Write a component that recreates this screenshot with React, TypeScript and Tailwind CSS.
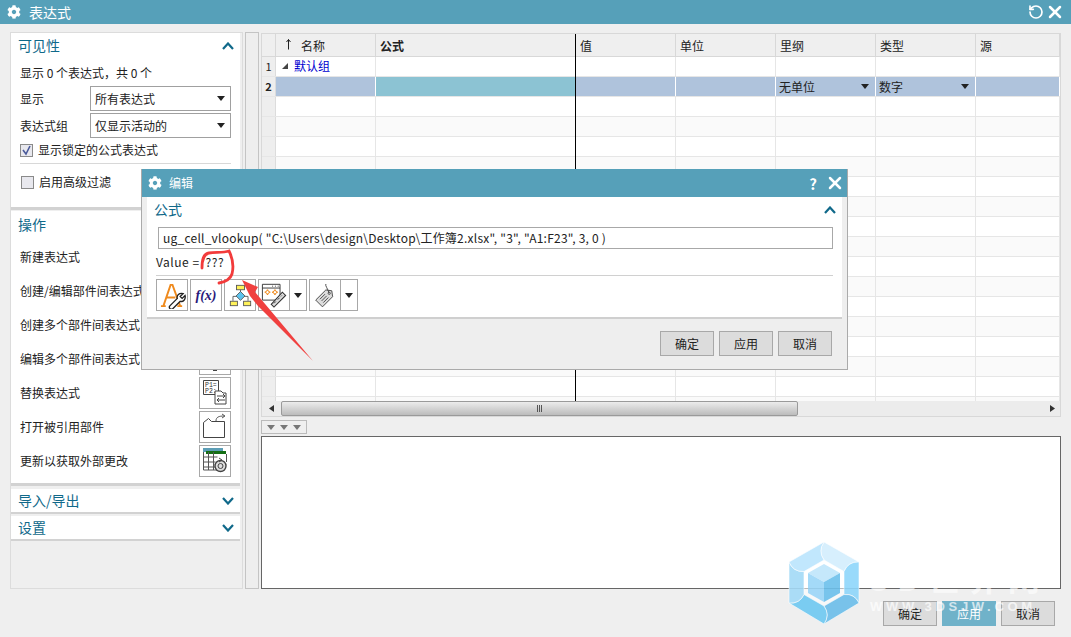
import { RotateCcw, X } from 'lucide-react';
import { FaCog } from 'react-icons/fa';

const FONT = '"Noto Sans CJK SC", sans-serif';

function Chevron({ down }: { down?: boolean }) {
  return (
    <svg width="12" height="8" viewBox="0 0 12 8">
      <polyline
        points={down ? '1,1 6,6.5 11,1' : '1,7 6,1.5 11,7'}
        fill="none"
        stroke="#10698a"
        strokeWidth="2.2"
      />
    </svg>
  );
}

function Caret({ color = '#222' }: { color?: string }) {
  return (
    <svg width="8" height="5" viewBox="0 0 8 5">
      <polygon points="0,0 8,0 4,5" fill={color} />
    </svg>
  );
}

function SelectBox({ label }: { label: string }) {
  return (
    <div className="flex h-[25px] w-[141px] items-center justify-between border border-[#a0a0a0] bg-white pl-[4px] pr-[5px]">
      <span>{label}</span>
      <Caret />
    </div>
  );
}

function Checkbox({ checked }: { checked?: boolean }) {
  return (
    <div className="flex h-[13px] w-[13px] items-center justify-center border border-[#8a8a8a] bg-[#e8e8ee]">
      {checked && (
        <svg width="11" height="11" viewBox="0 0 11 11">
          <polyline points="2,5 5,9 9,1" fill="none" stroke="#4a5a9a" strokeWidth="1.6" />
        </svg>
      )}
    </div>
  );
}

function ReplaceIcon() {
  return (
    <svg width="26" height="26" viewBox="0 0 26 26" fill="none" stroke="#444" strokeWidth="1">
      <path d="M1.5 1.5h15v14h-15z" fill="#fff" />
      <text x="3" y="7.5" fontSize="6.5" fontFamily="Liberation Mono" fill="#333" stroke="none">P1=</text>
      <text x="3" y="14" fontSize="6.5" fontFamily="Liberation Mono" fill="#333" stroke="none">P2:</text>
      <path d="M13 12h6l2 2h3v11h-11z" fill="#fff" />
      <path d="M15 17h8M21 15l2 2-2 2M23 21h-8M17 19l-2 2 2 2" />
    </svg>
  );
}

function OpenIcon() {
  return (
    <svg width="26" height="26" viewBox="0 0 26 26" fill="none" stroke="#444" strokeWidth="1">
      <path d="M1.5 9.5l5-4 3 3h13v16h-21z" />
      <path d="M14 8c0-4 3-5 8-5M20 1l3 2-3 2" stroke="#555" />
    </svg>
  );
}

function UpdateIcon() {
  return (
    <svg width="26" height="26" viewBox="0 0 26 26" fill="none" stroke="#555" strokeWidth="1">
      <rect x="1" y="1" width="20" height="4" fill="#5c9db5" stroke="none" />
      <rect x="4" y="4" width="20" height="3" fill="#156f15" stroke="none" />
      <path d="M1.5 5v18h14M1.5 10h14M1.5 15h12M1.5 20h12M6.5 5v18M11.5 5v18" />
      <path d="M24.5 7v8" />
      <circle cx="18.5" cy="19" r="5.5" stroke="#444" strokeWidth="1.4" fill="#ddd" />
      <circle cx="18.5" cy="19" r="2.5" stroke="#444" />
      <path d="M17 11l3 2-3 2" stroke="#444" />
    </svg>
  );
}

function FormulaIcon() {
  return (
    <svg width="27" height="27" viewBox="0 0 28 28" fill="none">
      <path d="M2 25h5M4.5 25L12 3h2l8 22M19 25h5M8 16h9" stroke="#ef8a1d" strokeWidth="2" />
      <path d="M11 25l8-8c-1-3 2-6 6-5l-3 3 2 2 3-3c1 4-2 7-5 6l-8 8c-2 1-4-1-3-3z" fill="#fff" stroke="#222" strokeWidth="1.4" />
    </svg>
  );
}

function FlowIcon() {
  return (
    <svg width="23" height="23" viewBox="0 0 26 26" fill="none" stroke="#555" strokeWidth="1">
      <path d="M13 6v4M4.5 19v-5H9M21.5 19v-5H17" />
      <rect x="8.5" y="1.5" width="9" height="5" fill="#fff25a" />
      <path d="M13 8.500l5 5-5 5-5-5z" fill="#5cc3ee" />
      <rect x="1.500" y="19.500" width="8" height="5" fill="#fff25a" />
      <rect x="16.500" y="19.500" width="8" height="5" fill="#fff25a" />
    </svg>
  );
}

function WindowLinkIcon() {
  return (
    <svg width="26" height="26" viewBox="0 0 28 28" fill="none">
      <path d="M1.500 2.500h19v17h-19z" stroke="#333" fill="#fff" />
      <path d="M1.500 6.500h19" stroke="#333" />
      <path d="M12 4.500h1M15 4.500h1M18 4.500h1" stroke="#333" />
      <path d="M4 11h6M7 8v6M12 11h6M15 8v6" stroke="#ef8a1d" strokeWidth="1.500" />
      <circle cx="7" cy="11" r="1.800" fill="#fff" stroke="#ef8a1d" />
      <circle cx="15" cy="11" r="1.800" fill="#fff" stroke="#ef8a1d" />
      <path d="M11 24L23 11l3.500 3.500L14 27z" fill="#ddd" stroke="#333" strokeWidth="1.200" />
      <path d="M14 23l2-2M18 19l2-2M21.500 15.500l1-1" stroke="#333" />
    </svg>
  );
}

function TagIcon() {
  return (
    <svg width="22" height="26" viewBox="0 0 26 28" fill="none" stroke="#444" strokeWidth="1.100">
      <path d="M2 20L14 8l7 1 1 7-12 12z" fill="#ddd" />
      <circle cx="18" cy="12" r="1.300" fill="#fff" />
      <path d="M18 12C16 6 13 3 14 1M7 19l6-6M9 21l6-6M11 23l6-6" />
    </svg>
  );
}

function ActionRow({ label, children }: { label: string; children?: React.ReactNode }) {
  return (
    <div className="flex h-[34px] items-center justify-between pl-[9px] pr-[9px]">
      <span>{label}</span>
      <div className="flex h-[32px] w-[32px] items-end justify-center border border-[#a8a8a8] bg-white pb-[3px]">{children}</div>
    </div>
  );
}

function SectionHead({ label, down }: { label: string; down?: boolean }) {
  return (
    <div className="flex h-[23px] items-center justify-between pl-[7px] pr-[6px] text-[14px] text-[#10698a]">
      <span>{label}</span>
      <Chevron down={down} />
    </div>
  );
}

const colClasses = ['w-[14px]', 'w-[100px]', 'w-[200px]', 'w-[100px]', 'w-[100px]', 'w-[100px]', 'w-[100px]', 'flex-1'];

function GridRow({ index }: { index: number }) {
  const selected = index === 2;
  const shade = index % 2 === 0 && !selected ? 'bg-[#fafafa]' : 'bg-white';
  return (
    <div className="flex h-[20px] shrink-0 border-b border-[#e6e6e6]">
      <div className={`${colClasses[0]} flex shrink-0 items-center justify-center border-r border-[#dcdcdc] bg-[#eeeeee] text-[11px] ${selected ? 'font-bold' : ''}`}>
        {index <= 2 ? index : ''}
      </div>
      {colClasses.slice(1).map((w, i) => {
        let bg = selected ? 'bg-[#afc3dc]' : shade;
        if (selected && i === 1) bg = 'bg-[#8cc3d3]';
        return (
          <div key={i} className={`${w} ${bg} flex shrink-0 items-center border-r ${selected ? 'border-white' : 'border-[#e6e6e6]'}`}>
            {index === 1 && i === 0 && (
              <span className="-mt-px flex items-center pl-[6px] text-[#0000d0]">
                <svg width="6" height="6" viewBox="0 0 6 6" className="mr-[6px]">
                  <polygon points="0,6 6,0 6,6" fill="#444" />
                </svg>
                默认组
              </span>
            )}
            {selected && i === 4 && (
              <div className="flex w-full items-center justify-between pl-[3px] pr-[6px]">
                <span>无单位</span>
                <Caret />
              </div>
            )}
            {selected && i === 5 && (
              <div className="flex w-full items-center justify-between pl-[3px] pr-[6px]">
                <span>数字</span>
                <Caret />
              </div>
            )}
          </div>
        );
      })}
    </div>
  );
}

function HeadCell({ w, children, bold }: { w: string; children?: React.ReactNode; bold?: boolean }) {
  return (
    <div className={`${w} flex shrink-0 items-center border-r border-[#d8d8d8] pl-[4px] pt-[2px] ${bold ? 'font-bold' : ''}`}>{children}</div>
  );
}

function FooterButton({ label, active }: { label: string; active?: boolean }) {
  return (
    <div className={`flex h-[25px] w-[54px] items-center justify-center border ${active ? 'border-[#70b2c9] bg-[#70b2c9] text-white' : 'border-[#a8a8a8] bg-[#dcdcdc]'}`}>
      {label}
    </div>
  );
}

function ToolButton({ children, caret }: { children: React.ReactNode; caret?: boolean }) {
  return (
    <div className="flex h-[32px] border border-[#a8a8a8] bg-white">
      <div className="flex w-[30px] items-center justify-center">{children}</div>
      {caret && (
        <div className="flex w-[17px] items-center justify-center border-l border-[#a8a8a8]">
          <Caret />
        </div>
      )}
    </div>
  );
}

function EditDialog() {
  return (
    <div className="absolute left-[141px] top-[169px] flex h-[201px] w-[707px] flex-col border-b border-l border-r border-[#aaaaaa] bg-[#eeeeee]">
      <div className="flex h-[28px] shrink-0 items-center justify-between bg-[#56a0b9] pl-[6px] pr-[2px] text-white">
        <div className="flex items-center gap-[7px]">
          <FaCog size={14} />
          <span>编辑</span>
        </div>
        <div className="flex items-center gap-[8px]">
          <span className="text-[15px] font-bold leading-none">?</span>
          <X size={20} strokeWidth={3} />
        </div>
      </div>
      <div className="ml-[5px] mr-[5px] h-[122px] shrink-0 border-b-2 border-[#cfcfcf] bg-white pl-[9px] pr-[9px]">
        <div className="flex h-[27px] items-center justify-between pb-[2px] text-[14px] text-[#10698a]">
          <span className="-ml-[2px]">公式</span>
          <div className="-mr-[3px]"><Chevron /></div>
        </div>
        <div className="ml-[2px] mt-[3px] flex h-[22px] items-center border border-[#a8a8a8] pl-[4px] tracking-[0.23px]">
          ug_cell_vlookup( "C:\Users\design\Desktop\工作簿2.xlsx", "3", "A1:F23", 3, 0 )
        </div>
        <div className="flex h-[26px] items-center">
          <span className="tracking-[0.5px]">Value =</span>
          <span className="ml-[6px] tracking-[0.5px]">???</span>
        </div>
        <div className="h-px bg-[#d0d0d0]" />
        <div className="mt-[3px] flex gap-[2px]">
          <ToolButton><FormulaIcon /></ToolButton>
          <ToolButton>
            <span className="font-['Liberation_Serif'] text-[14px] font-bold italic text-[#2a1a7a]">f(x)</span>
          </ToolButton>
          <ToolButton><FlowIcon /></ToolButton>
          <ToolButton caret><WindowLinkIcon /></ToolButton>
          <ToolButton caret><TagIcon /></ToolButton>
        </div>
      </div>
      <div className="flex flex-1 items-start justify-end gap-[5px] pr-[15px] pt-[12px]">
        <FooterButton label="确定" />
        <FooterButton label="应用" />
        <FooterButton label="取消" />
      </div>
    </div>
  );
}

function Watermark() {
  const outer = [[36, 0], [71, 20], [71, 61], [36, 82], [1, 61], [1, 20]];
  const inner = [[36, 18], [56, 29.5], [56, 52.5], [36, 64], [16, 52.5], [16, 29.5]];
  const fills = ['#d3eefd', '#8ed6fb', '#6cbeea', '#6ec9f2', '#a3daf7', '#bbe5fd'];
  // curved seam between an outer corner and the matching inner corner
  const ctrl = (i: number) => {
    const p = outer[i];
    const q = inner[i];
    return [(p[0] + q[0]) / 2 + (p[1] - q[1]) * 0.35, (p[1] + q[1]) / 2 - (p[0] - q[0]) * 0.35];
  };
  return (
    <>
      <svg className="absolute left-[788px] top-[542px] opacity-90" width="72" height="82" viewBox="0 0 72 82">
        <polygon points="36,18 56,29.5 56,52.5 36,64 16,52.5 16,29.5" fill="#fff" fillOpacity="0.6" />
        {outer.map((p, i) => {
          const j = (i + 1) % 6;
          const n = outer[j];
          const a = inner[i];
          const b = inner[j];
          const c0 = ctrl(i);
          const c1 = ctrl(j);
          return (
            <path
              key={i}
              d={`M${p[0]} ${p[1]}L${n[0]} ${n[1]}Q${c1[0]} ${c1[1]} ${b[0]} ${b[1]}L${a[0]} ${a[1]}Q${c0[0]} ${c0[1]} ${p[0]} ${p[1]}Z`}
              fill={fills[i]}
              stroke="#fff"
              strokeWidth="0.6"
            />
          );
        })}
        <polygon points="36,22 52,31 36,40 20,31" fill="#bfe6fb" />
        <polygon points="20,31 36,40 36,60 20,51" fill="#9bd6f8" />
        <polygon points="52,31 36,40 36,60 52,51" fill="#6cc0ec" />
      </svg>
      <div className="absolute left-[870px] top-[561px] text-[32px] font-bold leading-none tracking-[8px] text-white/60">3D世界网</div>
      <div className="absolute left-[870px] top-[600px] font-['Liberation_Sans'] text-[13px] font-bold leading-none tracking-[3.7px] text-white/70">WWW.3DSJW.COM</div>
    </>
  );
}

function Annotation() {
  return (
    <svg className="absolute left-0 top-0" width="1071" height="637">
      <path d="M202 268C202 260 203 254 209 253C216 252 223 253 229 251C232 257 234 266 232 274C230 280 225 282 219 283" fill="none" stroke="#f23b3b" strokeWidth="2.800" strokeLinecap="round" />
      <polygon points="242,280 258,287 255,292 313,361 258,306 250,296" fill="#f0403f" />
    </svg>
  );
}

export default function App() {
  return (
    <div className="relative flex h-[637px] w-[1071px] flex-col overflow-hidden bg-[#efefef] text-[12px] text-[#222]" style={{ fontFamily: FONT }}>
      <div className="flex h-[24px] shrink-0 items-center justify-between bg-[#56a0b9] pl-[7px] pr-[6px] text-[14px] text-white">
        <div className="flex items-center gap-[8px]">
          <FaCog size={14} />
          <span>表达式</span>
        </div>
        <div className="flex items-center gap-px">
          <RotateCcw size={16} strokeWidth={2.5} />
          <X size={20} strokeWidth={3} />
        </div>
      </div>

      <div className="mt-[8px] flex h-[557px] shrink-0 pl-[10px]">
        {/* left panel */}
        <div className="flex w-[233px] shrink-0 flex-col border border-[#dcdcdc] pr-[2px]">
          <div className="h-[177px] shrink-0 border-b-[3px] border-[#d2d2d2] bg-white">
            <div className="pt-px"><SectionHead label="可见性" /></div>
            <div className="flex flex-col pl-[9px] pr-[9px]">
              <div className="flex h-[29px] items-center pt-[3px]">显示 0 个表达式，共 0 个</div>
              <div className="flex h-[27px] items-start justify-between"><span className="leading-[25px]">显示</span><SelectBox label="所有表达式" /></div>
              <div className="flex h-[27px] items-start justify-between"><span className="leading-[25px]">表达式组</span><SelectBox label="仅显示活动的" /></div>
              <div className="flex h-[20px] items-center gap-[5px]"><Checkbox checked /><span>显示锁定的公式表达式</span></div>
              <div className="mt-[3px] h-px bg-[#d8d8d8]" />
              <div className="flex h-[36px] items-center justify-between pl-px">
                <div className="flex items-center gap-[5px]"><Checkbox /><span>启用高级过滤</span></div>
                <div className="-mb-[6px] h-[30px] w-[32px] border border-[#c8c8c8]" />
              </div>
            </div>
          </div>
          <div className="mt-px h-[275px] shrink-0 border-b-[3px] border-[#d2d2d2] bg-white">
            <div className="pt-[2px]"><SectionHead label="操作" /></div>
            <div className="mt-[4px]">
              <ActionRow label="新建表达式" />
              <ActionRow label="创建/编辑部件间表达式" />
              <ActionRow label="创建多个部件间表达式" />
              <ActionRow label="编辑多个部件间表达式">
                <div className="h-[2px] w-[4px] bg-[#444]" />
              </ActionRow>
              <ActionRow label="替换表达式"><ReplaceIcon /></ActionRow>
              <ActionRow label="打开被引用部件"><OpenIcon /></ActionRow>
              <ActionRow label="更新以获取外部更改"><UpdateIcon /></ActionRow>
            </div>
          </div>
          <div className="mt-[3px] shrink-0 border-b-[2px] border-[#d2d2d2] bg-white"><SectionHead label="导入/导出" down /></div>
          <div className="mt-[2px] shrink-0 border-b-[2px] border-[#d2d2d2] bg-white"><SectionHead label="设置" down /></div>
        </div>

        {/* splitter */}
        <div className="ml-[2px] w-[14px] shrink-0 border border-[#c4c4c4] bg-[#eeeeee]" />

        {/* right column */}
        <div className="ml-[2px] flex w-[800px] shrink-0 flex-col">
          <div className="relative mt-px flex h-[368px] shrink-0 flex-col overflow-hidden border-l border-r border-t border-[#d8d8d8] bg-white">
            <div className="flex h-[23px] shrink-0 border-b border-[#d8d8d8] bg-[#efefef]">
              <HeadCell w={colClasses[0]} />
              <HeadCell w={colClasses[1]}>
                <span className="flex items-center pl-[6px]">
                  <svg width="5" height="11" viewBox="0 0 5 11" className="mr-[10px] -mt-[3px]">
                    <path d="M2.500 0.500v10M0.500 3l2-2.500 2 2.500" fill="none" stroke="#222" />
                  </svg>
                  名称
                </span>
              </HeadCell>
              <HeadCell w={colClasses[2]} bold>公式</HeadCell>
              <HeadCell w={colClasses[3]}>值</HeadCell>
              <HeadCell w={colClasses[4]}>单位</HeadCell>
              <HeadCell w={colClasses[5]}>里纲</HeadCell>
              <HeadCell w={colClasses[6]}>类型</HeadCell>
              <HeadCell w={colClasses[7]}>源</HeadCell>
            </div>
            {Array.from({ length: 18 }, (_, i) => (
              <GridRow key={i} index={i + 1} />
            ))}
            <div className="absolute bottom-0 left-[313px] top-0 w-px bg-black" />
          </div>

          <div className="flex h-[16px] shrink-0 items-center border-b border-l border-r border-[#d8d8d8] bg-[#ececec]">
            <svg width="5" height="7" viewBox="0 0 5 7" className="ml-[7px]"><polygon points="5,0 5,7 0,3.500" fill="#333" /></svg>
            <div className="ml-[7px] flex h-[15px] w-[517px] items-center justify-center rounded-[2px] border border-[#9a9a9a] bg-gradient-to-b from-[#ececec] to-[#bcbcbc]">
              <div className="flex gap-px">
                <div className="h-[7px] w-px bg-[#555]" />
                <div className="h-[7px] w-px bg-[#555]" />
                <div className="h-[7px] w-px bg-[#555]" />
              </div>
            </div>
            <svg width="5" height="7" viewBox="0 0 5 7" className="ml-auto mr-[5px]"><polygon points="0,0 0,7 5,3.500" fill="#333" /></svg>
          </div>

          <div className="mt-[3px] flex h-[14px] w-[46px] shrink-0 items-center justify-center gap-[5px] border border-[#bbbbbb] bg-[#efefef]">
            <Caret color="#777" />
            <Caret color="#777" />
            <Caret color="#777" />
          </div>

          <div className="mt-[2px] h-[153px] shrink-0 border border-[#666666] bg-white" />
        </div>
      </div>

      <div className="flex justify-end gap-[5px] pr-[16px] pt-[12px]">
        <FooterButton label="确定" />
        <FooterButton label="应用" active />
        <FooterButton label="取消" />
      </div>

      <EditDialog />
      <Watermark />
      <Annotation />
    </div>
  );
}
